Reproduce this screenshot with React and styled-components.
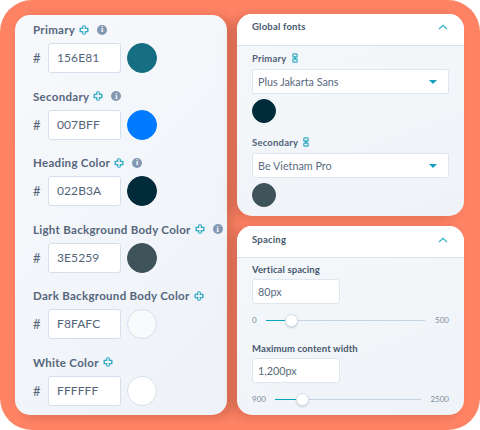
import styled, { createGlobalStyle } from "styled-components"

const Global = createGlobalStyle`
html, body { margin: 0; padding: 0; background: #fff; }
body { font-family: "Lato", "Liberation Sans", sans-serif; }
* { box-sizing: border-box; }
`

const Frame = styled.div`
width: 480px;
height: 430px;
padding: 14px 16px 15px 15px;
background: #fe8264;
border-radius: 32px;
display: grid;
grid-template-columns: 212px 227px;
column-gap: 10px;
overflow: hidden;
`
const ColorCard = styled.div`
height: 400px;
margin-top: 1px;
padding: 5px 0 0 18px;
background: linear-gradient(135deg, #f7f9fc, #eef2f7);
border-radius: 15px;
box-shadow: 6px 2px 10px rgba(90, 40, 30, 0.22);
`
const ColorRow = styled.div`
height: 66.6px;
`
const LabelRow = styled.div`
display: flex;
align-items: center;
height: 19px;
color: #56667d;
font-size: 11.5px;
font-weight: 700;
letter-spacing: 0.3px;
white-space: nowrap;
`
const Info = styled.span`
display: flex;
align-items: center;
justify-content: center;
width: 10px;
height: 10px;
margin-left: 8px;
border-radius: 50%;
background: #8398b2;
color: #fff;
font-size: 8px;
font-weight: 700;
font-family: "Liberation Serif", serif;
`
const ValueRow = styled.div`
display: flex;
align-items: center;
margin-top: 4px;
`
const Hash = styled.span`
width: 15px;
color: #566679;
font-size: 13px;
`
const HexInput = styled.div`
width: 73px;
height: 30px;
padding-left: 8px;
line-height: 28px;
background: #fff;
border: 1px solid #d6e0ec;
border-radius: 3px;
color: #536479;
font-size: 12px;
letter-spacing: 0.1px;
`
const Swatch = styled.div`
width: ${(p) => p.$size || 30}px;
height: ${(p) => p.$size || 30}px;
margin-left: ${(p) => (p.$flush ? 0 : 6)}px;
border-radius: 50%;
background: ${(p) => p.$color};
border: 1px solid ${(p) => (p.$outlined ? "#d6e0ec" : p.$color)};
`
const Side = styled.div`
display: grid;
grid-template-rows: 202px 189px;
row-gap: 10px;
`
const Panel = styled.div`
display: flex;
flex-direction: column;
background: linear-gradient(160deg, #f5f8fb, #eff3f7);
border-radius: 15px;
overflow: hidden;
box-shadow: -6px 2px 10px rgba(90, 40, 30, 0.18);
`
const PanelHead = styled.div`
display: flex;
align-items: center;
justify-content: space-between;
height: 32px;
padding: 0 15px ${(p) => p.$bottom}px;
background: #fff;
border-bottom: 1px solid #dbe3ec;
color: #47586e;
font-size: 9.5px;
font-weight: 700;
letter-spacing: 0.2px;
`
const PanelBody = styled.div`
padding: 0 15px;
`
const FontLabel = styled.div`
display: flex;
align-items: center;
gap: 5px;
height: 14px;
margin-top: ${(p) => p.$top}px;
color: #516178;
font-size: 9.5px;
font-weight: 700;
letter-spacing: 0.2px;
`
const Select = styled.div`
display: flex;
align-items: center;
justify-content: space-between;
height: 25px;
margin: 4px 0 5px;
padding: 0 11px 0 5px;
background: #fff;
border: 1px solid #dfe6ee;
border-radius: 2px;
color: #5a6a7e;
font-size: 10.8px;
`
const Caret = styled.span`
width: 0;
height: 0;
border-left: 4px solid transparent;
border-right: 4px solid transparent;
border-top: 4px solid #14a0bb;
`
const FieldLabel = styled.div`
height: 14px;
margin-top: ${(p) => p.$top}px;
color: #47586e;
font-size: 9.5px;
font-weight: 700;
letter-spacing: 0.1px;
`
const SizeInput = styled.div`
width: 88px;
height: 25px;
margin-top: 1px;
padding-left: 5px;
line-height: 23px;
background: #fff;
border: 1px solid #dfe6ee;
border-radius: 3px;
color: #5a6a7e;
font-size: 10.8px;
`
const SliderRow = styled.div`
display: flex;
align-items: center;
justify-content: space-between;
height: 20px;
margin-top: 6px;
color: #7c8a9b;
font-size: 8px;
`
const Track = styled.div`
position: relative;
width: ${(p) => p.$width}px;
height: 1px;
background: #c6d3e1;
`
const Fill = styled.div`
height: 1px;
background: #08a5c0;
`
const Thumb = styled.div`
position: absolute;
top: -6px;
width: 13px;
height: 13px;
margin-left: -6px;
border-radius: 50%;
background: #fff;
border: 1px solid #d9e1ea;
box-shadow: 0 1px 2px rgba(60, 80, 100, 0.25);
`
const IconWrap = styled.span`
display: flex;
margin-left: 4px;
`
const ChevronWrap = styled.span`
display: flex;
margin-right: 1px;
`

const SyncIcon = () => (
    <IconWrap>
        <svg width="10" height="10" viewBox="0 0 10 10" fill="none" stroke="#35abc4" strokeWidth="1.4">
            <path d="M3.6 1.2V3.4H1.2V6.6H3.6V8.8" />
            <path d="M6.4 1.2V3.4H8.8V6.6H6.4V8.8" />
            <path d="M3.6 .8H6.4M3.6 9.2H6.4" strokeWidth="1" />
        </svg>
    </IconWrap>
)
const LinkIcon = () => (
    <svg width="6" height="10" viewBox="0 0 6 10" fill="none" stroke="#2fa9c1" strokeWidth="1.2">
        <rect x="0.8" y="0.8" width="4.4" height="3.4" rx="1" />
        <rect x="0.8" y="5.8" width="4.4" height="3.4" rx="1" />
        <path d="M3 3v4" />
    </svg>
)
const Chevron = () => (
    <ChevronWrap>
        <svg width="10" height="6" viewBox="0 0 10 6" fill="none" stroke="#2fb2c8" strokeWidth="1.2">
            <path d="M1 5l4-3.6L9 5" />
        </svg>
    </ChevronWrap>
)

const colors = [
    { label: "Primary", hex: "156E81", color: "#156e81", info: true },
    { label: "Secondary", hex: "007BFF", color: "#007bff", info: true },
    { label: "Heading Color", hex: "022B3A", color: "#022b3a", info: true },
    { label: "Light Background Body Color", hex: "3E5259", color: "#3e5259", info: true },
    { label: "Dark Background Body Color", hex: "F8FAFC", color: "#f8fafc", outlined: true },
    { label: "White Color", hex: "FFFFFF", color: "#ffffff", outlined: true },
]

const App = () => {
    return (
        <Frame>
            <Global />
            <ColorCard>
                {colors.map((c) => (
                    <ColorRow key={c.label}>
                        <LabelRow>
                            {c.label}
                            <SyncIcon />
                            {c.info && <Info>i</Info>}
                        </LabelRow>
                        <ValueRow>
                            <Hash>#</Hash>
                            <HexInput>{c.hex}</HexInput>
                            <Swatch $color={c.color} $outlined={c.outlined} />
                        </ValueRow>
                    </ColorRow>
                ))}
            </ColorCard>
            <Side>
                <Panel>
                    <PanelHead $bottom={6}>
                        Global fonts
                        <Chevron />
                    </PanelHead>
                    <PanelBody>
                        <FontLabel $top={5}>Primary <LinkIcon /></FontLabel>
                        <Select>Plus Jakarta Sans <Caret /></Select>
                        <Swatch $color="#022b3a" $size={24} $flush />
                        <FontLabel $top={12}>Secondary <LinkIcon /></FontLabel>
                        <Select>Be Vietnam Pro <Caret /></Select>
                        <Swatch $color="#3e5259" $size={24} $flush />
                    </PanelBody>
                </Panel>
                <Panel>
                    <PanelHead $bottom={4}>
                        Spacing
                        <Chevron />
                    </PanelHead>
                    <PanelBody>
                        <FieldLabel $top={6}>Vertical spacing</FieldLabel>
                        <SizeInput>80px</SizeInput>
                        <SliderRow>
                            0
                            <Track $width={159}>
                                <Fill style={{ width: 25 }} />
                                <Thumb style={{ left: 25 }} />
                            </Track>
                            500
                        </SliderRow>
                        <FieldLabel $top={13}>Maximum content width</FieldLabel>
                        <SizeInput>1,200px</SizeInput>
                        <SliderRow>
                            900
                            <Track $width={146}>
                                <Fill style={{ width: 27 }} />
                                <Thumb style={{ left: 27 }} />
                            </Track>
                            2500
                        </SliderRow>
                    </PanelBody>
                </Panel>
            </Side>
        </Frame>
    )
}

export default App
